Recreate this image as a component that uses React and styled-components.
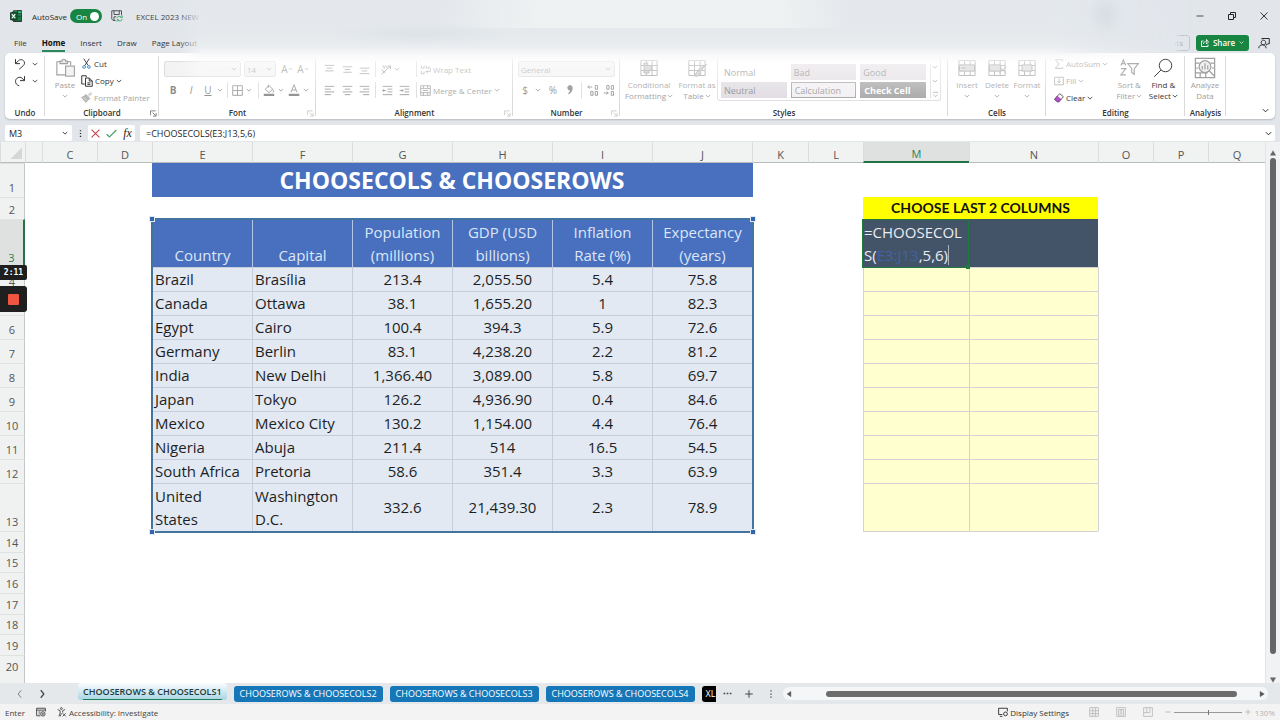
import React from 'react';
import styled, { createGlobalStyle, css } from 'styled-components';

const GlobalStyle = createGlobalStyle`
  * {
    box-sizing: border-box;
  }
  body {
    margin: 0;
    background: #e2e6eb;
    color: #262626;
    font-family: "Open Sans", "Noto Sans", sans-serif;
    font-size: 8px;
  }
  button, input, select {
    margin: 0;
    padding: 0;
    border: none;
    background: none;
    color: inherit;
    font: inherit;
  }
`;

const COLUMNS = [
  ['', 17], ['C', 55], ['D', 55], ['E', 100], ['F', 100], ['G', 100], ['H', 100], ['I', 100], ['J', 100],
  ['K', 56], ['L', 55], ['M', 106], ['N', 129], ['O', 55], ['P', 55], ['Q', null],
];

const HEADINGS = ['Country', 'Capital', 'Population (millions)', 'GDP (USD billions)', 'Inflation Rate (%)', 'Expectancy (years)'];

const COUNTRIES = [
  ['Brazil', 'Brasília', '213.4', '2,055.50', '5.4', '75.8'],
  ['Canada', 'Ottawa', '38.1', '1,655.20', '1', '82.3'],
  ['Egypt', 'Cairo', '100.4', '394.3', '5.9', '72.6'],
  ['Germany', 'Berlin', '83.1', '4,238.20', '2.2', '81.2'],
  ['India', 'New Delhi', '1,366.40', '3,089.00', '5.8', '69.7'],
  ['Japan', 'Tokyo', '126.2', '4,936.90', '0.4', '84.6'],
  ['Mexico', 'Mexico City', '130.2', '1,154.00', '4.4', '76.4'],
  ['Nigeria', 'Abuja', '211.4', '514', '16.5', '54.5'],
  ['South Africa', 'Pretoria', '58.6', '351.4', '3.3', '63.9'],
  ['United States', 'Washington D.C.', '332.6', '21,439.30', '2.3', '78.9'],
];

const EMPTY_ROWS = [14, 15, 16, 17, 18, 19, 20];

/* ---------- icons ---------- */

const Svg = styled.svg`
  display: block;
  flex: none;
  width: ${(p) => p.$size || 12}px;
  height: ${(p) => p.$size || 12}px;
  fill: none;
  stroke: currentColor;
  stroke-width: ${(p) => p.$stroke || 1.2};
`;

const Icon = ({ d, size, stroke, children }) => (
  <Svg viewBox="0 0 16 16" $size={size} $stroke={stroke} aria-hidden="true">
    {d && <path d={d} />}
    {children}
  </Svg>
);

const Chevron = ({ size = 6 }) => <Icon size={size} stroke={2.2} d="M2 5l6 6 6-6" />;

const ExcelLogo = () => (
  <Icon size={12} stroke={0}>
    <rect x="4" y="1" width="12" height="14" rx="1" fill="#21a366" />
    <path d="M10 1h5a1 1 0 0 1 1 1v3h-6z" fill="#33c481" />
    <path d="M4 8h12v6a1 1 0 0 1-1 1H5a1 1 0 0 1-1-1z" fill="#107c41" />
    <rect x="0" y="3.500" width="9.500" height="9.500" rx="1" fill="#0e6b37" />
    <path d="M2.500 5.500l4.500 5.500M7 5.500L2.500 11" stroke="#fff" strokeWidth="1.5" />
  </Icon>
);

const SaveIcon = () => (
  <Icon size={12} stroke={1}>
    <path d="M6 14H3L1 12V1h13v6M4 1v5h7V1M4 14V9h3" />
    <path d="M8 11a3.500 3.500 0 0 1 6-1.500M15 7.500V10h-2.500M15 12a3.500 3.500 0 0 1-6 1.500M8 15.500V13h2.500" stroke="#1d9a4b" />
  </Icon>
);

const PasteIcon = () => (
  <Icon size={20} stroke={0.9}>
    <path d="M8 13.500H1.500V3H4M10 3h2.500v3" />
    <path d="M4 4.500V2.500h1.500a1.500 1.500 0 0 1 3 0H10v2z" fill="#e8e8e8" />
    <rect x="8.500" y="6.500" width="7" height="8" fill="#f4f4f4" />
  </Icon>
);

const CutIcon = () => (
  <Icon size={11} stroke={1.3}>
    <path d="M4 1l6.500 10M12 1L5.500 11" />
    <circle cx="4.500" cy="13" r="2" stroke="#2f7fc1" />
    <circle cx="11.500" cy="13" r="2" stroke="#2f7fc1" />
  </Icon>
);

const CopyIcon = () => (
  <Icon size={12} stroke={1.3} d="M7 3V1H1v11h4M6 4h5l4 4v7H6zM11 4v4h4M8.500 10.500h4M8.500 12.500h4" />
);

const BrushIcon = () => (
  <Icon size={11} stroke={1.2}>
    <path d="M10 5l4-4 1.500 1.500-4 4" />
    <path d="M7 3.500l6 6-2 1.500-5.500-5.500zM5.500 5.500L1 8l6 7 4-4" fill="#c4c4c4" />
  </Icon>
);

const UndoIcon = () => <Icon size={12} stroke={1.3} d="M2 1.500v6h6M2 7.500L6 3.500c3-3 8-.5 8 3 0 2-1 3-2 4L7 15" />;
const RedoIcon = () => <Icon size={12} stroke={1.3} d="M14 1.500v6H8M14 7.500L10.500 4C7.500 1.500 2 4 2 8.500c0 3 2 5 5 6" />;

const LinesIcon = ({ d }) => <Icon size={11} stroke={1.2} d={d} />;

const LINES = {
  top: 'M1 2h14M4 6h8M2 10h12',
  middle: 'M1 4h14M4 8h8M2 12h12',
  bottom: 'M1 6h14M4 10h8M1 14h14',
  left: 'M1 2h14M1 6h9M1 10h14M1 14h9',
  center: 'M1 2h14M4 6h8M1 10h14M4 14h8',
  right: 'M1 2h14M6 6h9M1 10h14M6 14h9',
  outdent: 'M1 2h14M8 6h7M8 10h7M1 14h14M6 8H1M3 6L1 8l2 2',
  indent: 'M1 2h14M8 6h7M8 10h7M1 14h14M1 8h5M4 6l2 2-2 2',
};

const TableIcon = ({ mark }) => (
  <Icon size={20} stroke={0.8}>
    <path d="M1.500 2h13v12h-13zM1.500 6h13M1.500 10h13M6 2v12M10.500 2v12" />
    {mark === 'rules' && <path d="M4 6h6v4H4zM4 4h3v2H4zM4 10h4v2H4z" fill="#c9c9c9" />}
    {mark === 'brush' && <path d="M15.500 5l-5 6-1.500-1.500zM9.500 10c-2 0-1.500 3-4 4 2 1 5.500.5 5.500-2.500" fill="#c9c9c9" />}
    {mark === 'insert' && <path d="M2 5.500h12v5H2zM7 8H1m2.500-2.500L1 8l2.500 2.500" fill="#d4d4d4" />}
    {mark === 'delete' && <path d="M2 5.500h9v5H2zM10 7l5 5m0-5l-5 5" fill="#d4d4d4" />}
    {mark === 'format' && <path d="M4 5.500h8v5H4z" fill="#d9d9d9" />}
  </Icon>
);

const SortIcon = () => (
  <Icon size={20} stroke={0.9} d="M1.500 6L3.500 1.500 5.500 6M2.200 4.500h2.600M1.500 8.500h4l-4 5h4M7 4.500h8.500l-3.300 4V13l-2-1.500v-3z" />
);

const FindIcon = () => (
  <Icon size={20} stroke={0.8}>
    <circle cx="10" cy="6" r="5" />
    <path d="M6.500 9.500L1 15" />
  </Icon>
);

const AnalyzeIcon = () => (
  <Icon size={22} stroke={0.9}>
    <path d="M1 1h14v14H1zM1 4.500h3M1 8h2M1 11.500h9M12 4.500h3M13 8h2M4.500 12v3M8.500 12v3" />
    <circle cx="8" cy="7" r="4.300" fill="#f1f1f1" />
    <path d="M11 10l4 4M6 9V6.500M8 9V4.500M10 9V6" />
  </Icon>
);

/* ---------- window top ---------- */

const PageWrapper = styled.div`
  display: flex;
  flex-direction: column;
  min-height: 100vh;
  position: relative;
`;

const WindowTop = styled.header`
  position: relative;
`;

const TitleBar = styled.div`
  display: flex;
  align-items: center;
  height: 32px;
  padding: 0 12px 0 10px;
`;

const AutoSaveLabel = styled.label`
  margin-left: 10px;
`;

const ToggleWrapper = styled.span`
  position: relative;
  display: flex;
  align-items: center;
  margin: 0 9px 0 3px;
  color: white;
`;

const Toggle = styled.input`
  appearance: none;
  width: 32px;
  height: 14px;
  border-radius: 7px;
  background: #188542;

  &::after {
    content: '';
    display: block;
    width: 9px;
    height: 9px;
    margin: 3px 0 0 20px;
    border-radius: 50%;
    background: white;
  }
`;

const ToggleText = styled.span`
  position: absolute;
  left: 6px;
`;

const FileName = styled.span`
  margin-left: 13px;
  color: #444;
`;

const WindowButtons = styled.div`
  display: flex;
  gap: 24px;
  margin-left: auto;
  position: relative;
  z-index: 2;
`;

const PlainButton = styled.button`
  display: flex;
  align-items: center;
  justify-content: center;
`;

const TabRow = styled.nav`
  display: flex;
  align-items: center;
  height: 21px;
  padding: 0 10px 0 14px;
  gap: 15px;
`;

const RibbonTab = styled.button`
  height: 18px;
  padding: 0;
  color: #333;
  ${(p) => p.$active && css`
    color: #111;
    font-weight: 700;
    border-bottom: 2px solid #2b8a5a;
    padding-top: 2px;
  `}
`;

const TabActions = styled.div`
  display: flex;
  align-items: center;
  gap: 9px;
  margin-left: auto;
  position: relative;
  z-index: 2;
`;

const CommentsButton = styled.button`
  height: 16px;
  margin-right: -3px;
  padding: 0 6px;
  border: 1px solid #c3c8cc;
  border-radius: 3px;
  color: #a5abb0;
  mask-image: linear-gradient(to right, transparent calc(100% - 16px), black calc(100% - 8px));
`;

const ShareButton = styled.button`
  display: flex;
  align-items: center;
  justify-content: center;
  gap: 4px;
  width: 53px;
  height: 16px;
  border-radius: 3px;
  background: #188542;
  color: white;
  font-weight: 600;
`;

const Haze = styled.div`
  position: absolute;
  inset: 0;
  z-index: 1;
  pointer-events: none;
  background:
    radial-gradient(ellipse 18px 22px at 1106px 14px, rgba(200, 207, 213, 0.8), transparent),
    radial-gradient(ellipse 90px 12px at 420px 34px, rgba(214, 220, 226, 0.5), transparent),
    linear-gradient(to right, transparent 440px, rgba(240, 244, 244, 0.8) 540px, rgba(240, 244, 244, 0.8) 780px, transparent 850px) 0 0 / 100% 28px no-repeat,
    linear-gradient(
      to bottom,
      #e4e8ec 0,
      #e5e9ec 34px,
      #eaedf0 46px,
      rgba(250, 250, 251, 0.96) 57px,
      rgba(255, 255, 255, 0.5) 63px,
      rgba(255, 255, 255, 0.3) 80px,
      transparent 100px
    );
  mask-image: linear-gradient(to right, transparent 178px, black 202px, black calc(100% - 230px), rgba(0, 0, 0, 0.5) calc(100% - 180px), transparent calc(100% - 84px));
`;

/* ---------- ribbon ---------- */

const Ribbon = styled.div`
  display: flex;
  height: 66px;
  margin: 0 5px;
  padding: 0;
  border-radius: 5px;
  background: white;
  box-shadow: 0 1px 2px rgba(0, 0, 0, 0.2);
`;

const GroupBox = styled.section`
  position: relative;
  display: flex;
  flex-direction: column;
  flex: ${(p) => (p.$grow ? '1 0' : '0 0')} ${(p) => p.$width}px;
  min-width: 0;

  &::after {
    content: '';
    position: absolute;
    right: 0;
    top: 3px;
    bottom: 3px;
    width: 1px;
    background: #d9d9d9;
  }
`;

const GroupBody = styled.div`
  display: flex;
  flex: 1;
  padding: 0 ${(p) => p.$pad || 0}px;
`;

const GroupLabel = styled.div`
  height: 13px;
  line-height: 13px;
  text-align: center;
  font-weight: 600;
  color: #333;
`;

const Launcher = styled.button`
  position: absolute;
  right: 2px;
  bottom: 2px;
  color: ${(p) => (p.$dim ? '#bbb' : '#555')};
`;

const Group = ({ label, width, grow, pad, launcher, dim, children }) => (
  <GroupBox $width={width} $grow={grow} aria-label={label}>
    <GroupBody $pad={pad}>{children}</GroupBody>
    <GroupLabel>{label}</GroupLabel>
    {launcher && (
      <Launcher $dim={dim} aria-label={`${label} settings`}>
        <Icon size={7} stroke={1.6} d="M1 12V2h12M6 6l7 7M14 7v7H7" />
      </Launcher>
    )}
  </GroupBox>
);

const Stack = styled.div`
  display: flex;
  flex-direction: column;
  padding-top: ${(p) => (p.$two ? 6 : 2)}px;
  gap: ${(p) => (p.$two ? 1 : 0)}px;
`;

const ToolRow = styled.div`
  display: flex;
  align-items: center;
  height: 20px;
  color: #8d8d8d;
`;

const Tool = styled.button`
  display: flex;
  align-items: center;
  justify-content: center;
  width: ${(p) => p.$width || 18}px;
  height: 16px;
  font-size: 10px;
  font-weight: ${(p) => (p.$bold ? 700 : 400)};
  font-style: ${(p) => (p.$italic ? 'italic' : 'normal')};
  text-decoration: ${(p) => (p.$underline ? 'underline' : 'none')};
`;

const Divider = styled.span`
  width: 1px;
  height: 16px;
  margin: 0 3px;
  background: #dcdcdc;
`;

const TextTool = styled.button`
  display: flex;
  align-items: center;
  gap: ${(p) => p.$gap || 2}px;
  height: 17px;
  white-space: nowrap;
  color: ${(p) => (p.$dim ? '#a4a4a4' : '#333')};
`;

const BigTool = styled.button`
  display: flex;
  flex-direction: column;
  align-items: center;
  width: ${(p) => p.$width}px;
  height: 50px;
  padding-top: 4px;
  line-height: 11px;
  white-space: nowrap;
  color: ${(p) => (p.$dim ? '#a0a0a0' : '#333')};
`;

const BigLabel = styled.span`
  display: flex;
  align-items: center;
  gap: 1px;
  min-height: 11px;
`;

const BigIcon = styled.span`
  display: flex;
  align-items: center;
  height: 22px;
`;

const Big = ({ width, dim, icon, first, second, arrow }) => (
  <BigTool $width={width} $dim={dim}>
    <BigIcon>{icon}</BigIcon>
    <BigLabel>{first}</BigLabel>
    <BigLabel>{second}{arrow && <Chevron />}</BigLabel>
  </BigTool>
);

const SelectWrapper = styled.span`
  display: flex;
  align-items: center;
  justify-content: flex-end;
  position: relative;
  width: ${(p) => p.$width}px;
  height: 16px;
  margin-right: 3px;
  border: 1px solid #dedede;
  border-radius: 2px;
  background: #f3f3f3;
  padding-right: 3px;
  color: #aaa;

  select {
    appearance: none;
    position: absolute;
    inset: 0;
    width: 100%;
    padding-left: 2px;
  }
`;

const Dropdown = ({ label, width, value }) => (
  <SelectWrapper $width={width}>
    <select aria-label={label} defaultValue={value}>
      <option value={value}>{value}</option>
    </select>
    <Chevron />
  </SelectWrapper>
);

const Gallery = styled.div`
  display: grid;
  grid-template-columns: repeat(3, 1fr) 10px;
  grid-template-rows: 16px 16px;
  column-gap: 4px;
  row-gap: 2px;
  flex: 1;
  height: 46px;
  margin: 2px 6px 0 0;
  padding: 9px 0 3px 3px;
  border: 1px solid #e0e0e0;
  border-top: none;
  border-radius: 3px;
`;

const StyleCell = styled.button`
  padding: 0 3px;
  text-align: left;
  font-size: 9px;
  background: ${(p) => p.$bg || 'transparent'};
  color: ${(p) => p.$color || '#8c8c8c'};
  border: ${(p) => (p.$line ? '1px solid #aaa' : 'none')};
  font-weight: ${(p) => (p.$bold ? 700 : 400)};
`;

const GalleryScroll = styled.div`
  grid-column: 4;
  grid-row: 1 / 3;
  display: flex;
  flex-direction: column;
  align-items: center;
  justify-content: space-between;
  border-left: 1px solid #e0e0e0;
  color: #999;
`;

const RibbonEnd = styled.div`
  display: flex;
  align-items: flex-end;
  justify-content: flex-end;
  width: 49px;
  padding: 0 6px 5px 0;
`;

/* ---------- formula bar ---------- */

const FormulaBar = styled.div`
  display: flex;
  align-items: center;
  height: 23px;
  padding: 6px 5px 1px;
  font-size: 9px;
`;

const NameBox = styled.div`
  display: flex;
  align-items: center;
  width: 67px;
  height: 16px;
  padding: 0 4px;
  border-radius: 2px;
  background: white;

  input {
    flex: 1;
    min-width: 0;
  }
`;

const FormulaButtons = styled.div`
  display: flex;
  align-items: center;
  justify-content: space-around;
  width: 47px;
  height: 16px;
  margin-right: 5px;
  border-radius: 2px;
  background: white;
`;

const BarDots = styled.span`
  display: flex;
  justify-content: center;
  width: 16px;
`;

const FunctionButton = styled.button`
  font-family: "Liberation Serif", serif;
  font-size: 12px;
  font-style: italic;
`;

const FormulaField = styled.div`
  display: flex;
  align-items: center;
  flex: 1;
  height: 16px;
  padding: 0 3px 0 6px;
  border-radius: 2px;
  background: white;

  input {
    flex: 1;
    outline: none;
  }
`;

/* ---------- sheet ---------- */

const Workbook = styled.main`
  display: flex;
  flex: 1;
  background: white;
`;

const SheetArea = styled.div`
  position: relative;
  flex: 1;
  min-width: 0;
  overflow: hidden;
  background: linear-gradient(to right, #f0f1f1 24px, #c3c7c9 24px, #c3c7c9 25px, white 25px);
`;

const Sheet = styled.table`
  width: 100%;
  table-layout: fixed;
  border-collapse: separate;
  border-spacing: 0;
  font-size: 15px;
  line-height: 23px;

  td, th {
    padding: 0;
  }
`;

const ColumnHeader = styled.th`
  height: 21px;
  border-left: 1px solid #dcdddd;
  border-bottom: ${(p) => (p.$active ? '2px solid #217346' : '1px solid #b9bcbd')};
  background: ${(p) => (p.$active ? '#dfe1e1' : '#f1f2f2')};
  color: ${(p) => (p.$active ? '#2a8050' : '#555')};
  font-size: 11px;
  font-weight: 400;
  line-height: 15px;
  vertical-align: bottom;
`;

const CornerMark = styled.span`
  display: block;
  width: 11px;
  height: 11px;
  margin: 0 0 3px 10px;
  background: linear-gradient(135deg, transparent 50%, #d5d6d6 50%);
`;

const RowHeader = styled.th`
  height: ${(p) => p.$height}px;
  border-right: ${(p) => (p.$active ? '2px solid #217346' : '1px solid #c3c7c9')};
  border-top: 1px solid #e0e2e2;
  background: ${(p) => (p.$active ? '#dfe1e1' : '#f0f1f1')};
  color: ${(p) => (p.$active ? '#2a8050' : '#555')};
  font-size: 11px;
  font-weight: 400;
  line-height: 18px;
  vertical-align: bottom;
`;

const TitleCell = styled.td`
  background: #4870bf;
  color: white;
  text-align: center;
  font-size: 23px;
  font-weight: 700;
  box-shadow: 1px 0 #4870bf;
`;

const HeadingCell = styled.th`
  border-left: 1px solid #b4c6e7;
  border-top: 1px solid #b4c6e7;
  background: #4870bf;
  color: #dce6f8;
  font-weight: 400;
  text-align: center;
  vertical-align: bottom;

  span {
    display: block;
    padding: 0 4px;
  }
`;

const DataCell = styled.td`
  border-left: 1px solid #c6cedb;
  border-top: 1px solid #c6cedb;
  background: #e2e9f3;
  color: #1d1f24;
  text-align: ${(p) => (p.$text ? 'left' : 'center')};

  span {
    display: block;
    padding: ${(p) => (p.$text ? '0 8px 0 2px' : '0 2px')};
  }
`;

const YellowTitle = styled.td`
  background: #ffff00;
  color: #111;
  text-align: center;
  font-family: Lato, "Open Sans", sans-serif;
  font-size: 14px;
  font-weight: 700;
  line-height: 20px;
`;

const DarkCell = styled.td`
  position: relative;
  background: #445468;
  color: #e8edf2;
`;

const CellEditor = styled.div`
  position: absolute;
  inset: 0 0 -1px -1px;
  z-index: 1;
  padding: 1px 0 0 1px;
  border: 1px solid #1f7a3e;
  line-height: 23px;
  word-break: break-all;

  &::after {
    content: '';
    position: absolute;
    right: -2px;
    bottom: -2px;
    width: 4px;
    height: 4px;
    background: #1f7a3e;
  }
`;

const RangeText = styled.span`
  color: #3f62a6;
`;

const Caret = styled.span`
  border-right: 1px solid #a9b4c0;
`;

const PaleCell = styled.td`
  border-left: 1px solid #d3d3d3;
  border-top: 1px solid #d3d3d3;
  background: #ffffcf;
  box-shadow: 1px 0 #d3d3d3, 0 1px #d3d3d3;
`;

// border round the range that the formula refers to
const RangeOutline = styled.span`
  position: absolute;
  left: -2px;
  top: -2px;
  z-index: 1;
  width: 603px;
  height: 315px;
  border: 2px solid #41759f;
  pointer-events: none;
`;

const Handle = styled.i`
  position: absolute;
  width: 4px;
  height: 4px;
  background: #3465a8;
  outline: 1px solid #dfe8f5;
  ${(p) => p.$y}: -3px;
  ${(p) => p.$x}: -3px;
`;

const FirstHeading = styled(HeadingCell)`
  position: relative;
  overflow: visible;

  > span:last-child {
    padding: 0;
  }
`;

const VerticalBar = styled.div`
  display: flex;
  flex-direction: column;
  align-items: center;
  justify-content: space-between;
  width: 15px;
  padding: 8px 0 0;
  background: #f0f2f4;
  border-left: 1px solid #e2e5e8;
  color: #666;
`;

const VerticalThumb = styled.div`
  flex: 1;
  width: 6px;
  margin: 2px 0 23px;
  border-radius: 3px;
  background: #666;
`;

const Recorder = styled.aside`
  position: absolute;
  left: 0;
  top: 265px;
  z-index: 3;
  display: flex;
  flex-direction: column;
  gap: 6px;
  width: 27px;
`;

const RecorderTime = styled.div`
  height: 15px;
  border-radius: 0 2px 2px 0;
  background: #1f1f1f;
  color: white;
  font-family: "DejaVu Sans Mono", monospace;
  font-size: 8px;
  font-weight: 700;
  line-height: 15px;
  text-align: center;
`;

const RecorderStop = styled.button`
  display: flex;
  align-items: center;
  justify-content: center;
  height: 26px;
  border-radius: 0 3px 3px 0;
  background: #1f1f1f;

  span {
    width: 11px;
    height: 11px;
    border-radius: 1px;
    background: #ef5541;
  }
`;

/* ---------- bottom bars ---------- */

const SheetTabs = styled.footer`
  display: flex;
  align-items: center;
  height: 21px;
  padding-left: 15px;
  background: #e4e8eb;
  color: #444;
`;

const NavButtons = styled.div`
  display: flex;
  gap: 12px;
  width: 63px;
`;

const SheetTab = styled.button`
  height: 16px;
  margin-right: 7px;
  padding: 0 6px;
  border-radius: 3px;
  background: #1577b8;
  color: white;
  font-size: 9px;
  line-height: 16px;
  white-space: nowrap;
  ${(p) => p.$active && css`
    align-self: flex-start;
    height: 17px;
    padding: 0 5px;
    background: linear-gradient(#fbfdfe, #a9d4e4);
    color: #1c3a3c;
    font-weight: 600;

    span {
      display: block;
      height: 16px;
      border-bottom: 1px solid #16805b;
    }
  `}
  ${(p) => p.$cut && css`
    width: 14px;
    padding: 0 0 0 4px;
    overflow: hidden;
    text-align: left;
    border-radius: 3px 0 0 3px;
    background: black;
  `}
`;

const TabTools = styled.div`
  display: flex;
  align-items: center;
  gap: 12px;
  margin-right: 7px;
`;

const HorizontalBar = styled.div`
  display: flex;
  align-items: center;
  gap: 34px;
  flex: 1;
  height: 13px;
  margin-right: 12px;
  padding: 0 3px;
  border-radius: 6px;
  background: #f4f6f7;
  color: #555;
`;

const HorizontalThumb = styled.div`
  flex: 1;
  height: 6px;
  margin-right: -12px;
  border-radius: 3px;
  background: #6c6c6c;
`;

const StatusBar = styled.div`
  display: flex;
  align-items: center;
  height: 16px;
  padding: 0 5px;
  background: #f3f3f3;
  color: #444;
`;

const StatusItem = styled.button`
  display: flex;
  align-items: center;
  gap: 2px;
  margin-left: 11px;
`;

const StatusRight = styled.div`
  display: flex;
  align-items: center;
  margin-left: auto;
  color: #b3b3b3;
`;

const ViewButtons = styled.div`
  display: flex;
  gap: 17px;
  margin: 0 12px 0 20px;
`;

const ZoomSlider = styled.input`
  appearance: none;
  width: 68px;
  height: 8px;
  margin: 0 3px;
  background: linear-gradient(#999, #999) center / 100% 1px no-repeat;

  &::-webkit-slider-thumb {
    appearance: none;
    width: 1px;
    height: 5px;
    background: #777;
  }
`;

const ZoomText = styled.span`
  width: 24px;
  text-align: right;
`;

const RibbonBar = () => (
  <Ribbon>
    <Group label="Undo" width={40} pad={9}>
      <Stack>
        <TextTool $gap={6} aria-label="Undo"><UndoIcon /><Chevron /></TextTool>
        <TextTool $gap={6} aria-label="Redo"><RedoIcon /><Chevron /></TextTool>
      </Stack>
    </Group>
    <Group label="Clipboard" width={114} pad={4} launcher>
      <Big width={32} dim icon={<PasteIcon />} first="Paste" arrow />
      <Stack>
        <TextTool><CutIcon />Cut</TextTool>
        <TextTool><CopyIcon />Copy <Chevron /></TextTool>
        <TextTool $dim><BrushIcon />Format Painter</TextTool>
      </Stack>
    </Group>
    <Group label="Font" width={157} pad={5} launcher dim>
      <Stack $two>
        <ToolRow>
          <Dropdown label="Font name" width={77} value="" />
          <Dropdown label="Font size" width={32} value="14" />
          <Tool $width={16}>A<Icon size={5} stroke={2} d="M3 9l5-6 5 6" /></Tool>
          <Tool $width={16}>A<Icon size={5} stroke={2} d="M3 3l5 6 5-6" /></Tool>
        </ToolRow>
        <ToolRow>
          <Tool $bold>B</Tool>
          <Tool $italic>I</Tool>
          <Tool $underline $width={16}>U</Tool>
          <Tool $width={8} aria-label="Underline styles"><Chevron /></Tool>
          <Divider />
          <Tool $width={12} aria-label="Borders"><Icon size={11} d="M1 1h14v14H1zM8 1v14M1 8h14" /></Tool>
          <Tool $width={12} aria-label="Border styles"><Chevron /></Tool>
          <Divider />
          <Tool $width={14} aria-label="Fill color">
            <Icon size={12}>
              <path d="M7 1v4M3 7l5-5 5 5-5 4.500zM13 8c2 2 1 3 0 3" />
              <path d="M1 13h14v3H1z" fill="currentColor" stroke="none" />
            </Icon>
          </Tool>
          <Tool $width={10} aria-label="Fill colors"><Chevron /></Tool>
          <Tool $width={16} aria-label="Font color">
            <Icon size={12}>
              <path d="M4 11L8 1l4 10M5.500 8h5" />
              <path d="M1 13h14v3H1z" fill="currentColor" stroke="none" />
            </Icon>
          </Tool>
          <Tool $width={8} aria-label="Font colors"><Chevron /></Tool>
        </ToolRow>
      </Stack>
    </Group>
    <Group label="Alignment" width={197} pad={4} launcher dim>
      <Stack $two>
        <ToolRow>
          <Tool aria-label="Top align"><LinesIcon d={LINES.top} /></Tool>
          <Tool aria-label="Middle align"><LinesIcon d={LINES.middle} /></Tool>
          <Tool $width={16} aria-label="Bottom align"><LinesIcon d={LINES.bottom} /></Tool>
          <Divider />
          <Tool $width={14} aria-label="Orientation"><Icon size={12} d="M2 9l5 4M3 5c2-2 4 0 2 3M7 3l3 4M2 15L14 4M10 4h4v4" /></Tool>
          <Tool $width={8} aria-label="Orientations"><Chevron /></Tool>
        </ToolRow>
        <ToolRow>
          <Tool aria-label="Align left"><LinesIcon d={LINES.left} /></Tool>
          <Tool aria-label="Center"><LinesIcon d={LINES.center} /></Tool>
          <Tool $width={16} aria-label="Align right"><LinesIcon d={LINES.right} /></Tool>
          <Divider />
          <Tool $width={16} aria-label="Decrease indent"><LinesIcon d={LINES.outdent} /></Tool>
          <Tool aria-label="Increase indent"><LinesIcon d={LINES.indent} /></Tool>
        </ToolRow>
      </Stack>
      <Stack $two>
        <ToolRow>
          <Divider />
          <TextTool $dim><Icon size={11} d="M2 2v4h4V3M9 2v4h4V3M2 10v4h4v-3M15 6v5H9M11 9l-2 2 2 2" />Wrap Text</TextTool>
        </ToolRow>
        <ToolRow>
          <Divider />
          <TextTool $dim><Icon size={11} d="M1 1h14v14H1zM1 5h14M1 11h14M5 1v4M11 1v4M5 11v4M11 11v4M4 8h8" />Merge & Center <Chevron /></TextTool>
        </ToolRow>
      </Stack>
    </Group>
    <Group label="Number" width={107} pad={5} launcher dim>
      <Stack $two>
        <ToolRow><Dropdown label="Number format" width={97} value="General" /></ToolRow>
        <ToolRow>
          <Tool $width={14}>$</Tool>
          <Tool $width={12} aria-label="Currencies"><Chevron /></Tool>
          <Tool>%</Tool>
          <Tool $width={16} aria-label="Comma style"><Icon size={12} stroke={0}><path d="M8 2a3 3 0 0 1 3 3c0 4-2 7-5 8 2-2 3-4 2-5a3 3 0 0 1 0-6z" fill="currentColor" /></Icon></Tool>
          <Divider />
          <Tool $width={16} aria-label="Increase decimal"><Icon size={12} d="M7 4H1M3 2L1 4l2 2M11 2h3v5h-3zM5 10h3v5H5zM11 10h3v5h-3z" /></Tool>
          <Tool $width={16} aria-label="Decrease decimal"><Icon size={12} d="M5 2h3v5H5zM11 2h3v5h-3zM1 12h6M5 10l2 2-2 2M11 10h3v5h-3z" /></Tool>
        </ToolRow>
      </Stack>
    </Group>
    <Group label="Styles" width={328} grow pad={1}>
      <Big width={56} dim icon={<TableIcon mark="rules" />} first="Conditional" second="Formatting" arrow />
      <Big width={40} dim icon={<TableIcon mark="brush" />} first="Format as" second="Table" arrow />
      <Gallery>
        <StyleCell>Normal</StyleCell>
        <StyleCell $bg="#e4dfe4">Bad</StyleCell>
        <StyleCell $bg="#e4e1e4">Good</StyleCell>
        <StyleCell $bg="#e1dde3">Neutral</StyleCell>
        <StyleCell $bg="#f3f0f3" $color="#9c9c9c" $line>Calculation</StyleCell>
        <StyleCell $bg="#a9a9a9" $color="white" $line $bold>Check Cell</StyleCell>
        <GalleryScroll><Chevron /><Chevron /><Icon size={7} stroke={1.5} d="M2 3h12M3 8l5 5 5-5" /></GalleryScroll>
      </Gallery>
    </Group>
    <Group label="Cells" width={98} pad={4}>
      <Big width={30} dim icon={<TableIcon mark="insert" />} first="Insert" arrow />
      <Big width={30} dim icon={<TableIcon mark="delete" />} first="Delete" arrow />
      <Big width={30} dim icon={<TableIcon mark="format" />} first="Format" arrow />
    </Group>
    <Group label="Editing" width={139} pad={8}>
      <Stack>
        <TextTool $dim><Icon size={10} stroke={1.5} d="M14 3V1H2l6 7-6 7h12v-2" />AutoSum <Chevron /></TextTool>
        <TextTool $dim><Icon size={10} stroke={1.3} d="M1 2h14v12H1zM8 4v7M5 8l3 3 3-3" />Fill <Chevron /></TextTool>
        <TextTool>
          <Icon size={10} stroke={1.3}>
            <path d="M9 1l6 5-7 8H5L1 10z" />
            <path d="M5 5l6 5-3 4H5L1 10z" fill="#b14fc0" stroke="#8e3a9d" />
          </Icon>
          Clear <Chevron />
        </TextTool>
      </Stack>
      <Big width={42} dim icon={<SortIcon />} first="Sort &" second="Filter" arrow />
      <Big width={26} icon={<FindIcon />} first="Find &" second="Select" arrow />
    </Group>
    <Group label="Analysis" width={41}>
      <Big width={40} dim icon={<AnalyzeIcon />} first="Analyze" second="Data" />
    </Group>
    <RibbonEnd><PlainButton aria-label="Collapse ribbon"><Chevron size={7} /></PlainButton></RibbonEnd>
  </Ribbon>
);

const FirstTableCell = () => (
  <FirstHeading>
    <span>Country</span>
    <RangeOutline>
      <Handle $x="left" $y="top" />
      <Handle $x="right" $y="top" />
      <Handle $x="left" $y="bottom" />
      <Handle $x="right" $y="bottom" />
    </RangeOutline>
  </FirstHeading>
);

const Spreadsheet = () => (
  <Sheet>
    <colgroup>
      <col width="25" />
      {COLUMNS.map(([name, width]) => <col key={name} width={width || undefined} />)}
    </colgroup>
    <thead>
      <tr>
        <ColumnHeader><CornerMark /></ColumnHeader>
        {COLUMNS.map(([name]) => <ColumnHeader key={name} $active={name === 'M'}>{name}</ColumnHeader>)}
      </tr>
    </thead>
    <tbody>
      <tr>
        <RowHeader $height={34}>1</RowHeader>
        <td colSpan={3} />
        <TitleCell colSpan={6}>CHOOSECOLS & CHOOSEROWS</TitleCell>
        <td colSpan={7} />
      </tr>
      <tr>
        <RowHeader $height={22}>2</RowHeader>
        <td colSpan={11} />
        <YellowTitle colSpan={2}>CHOOSE LAST 2 COLUMNS</YellowTitle>
        <td colSpan={3} />
      </tr>
      <tr>
        <RowHeader $height={48} $active>3</RowHeader>
        <td colSpan={3} />
        <FirstTableCell />
        {HEADINGS.slice(1).map((text) => <HeadingCell key={text}><span>{text}</span></HeadingCell>)}
        <td colSpan={2} />
        <DarkCell>
          <CellEditor>=CHOOSECOLS(<RangeText>E3:J13</RangeText>,5,6)<Caret /></CellEditor>
        </DarkCell>
        <DarkCell />
        <td colSpan={3} />
      </tr>
      {COUNTRIES.map((row, i) => (
        <tr key={row[0]}>
          <RowHeader $height={i === 9 ? 48 : 24}>{i + 4}</RowHeader>
          <td colSpan={3} />
          {row.map((value, n) => <DataCell key={n} $text={n < 2}><span>{value}</span></DataCell>)}
          <td colSpan={2} />
          <PaleCell />
          <PaleCell />
          <td colSpan={3} />
        </tr>
      ))}
      {EMPTY_ROWS.map((n) => (
        <tr key={n}>
          <RowHeader $height={n % 3 ? 21 : 20}>{n}</RowHeader>
          <td colSpan={16} />
        </tr>
      ))}
    </tbody>
  </Sheet>
);

const App = () => {
  return (
    <PageWrapper>
      <GlobalStyle />
      <WindowTop>
        <TitleBar>
          <ExcelLogo />
          <AutoSaveLabel htmlFor="autosave">AutoSave</AutoSaveLabel>
          <ToggleWrapper>
            <Toggle id="autosave" type="checkbox" defaultChecked />
            <ToggleText>On</ToggleText>
          </ToggleWrapper>
          <SaveIcon />
          <FileName>EXCEL 2023 NEW F</FileName>
          <WindowButtons>
            <PlainButton aria-label="Minimize"><Icon size={8} stroke={1.6} d="M1 8h14" /></PlainButton>
            <PlainButton aria-label="Restore"><Icon size={8} stroke={2} d="M1 5h10v10H1zM5 4V1h10v10h-3" /></PlainButton>
            <PlainButton aria-label="Close"><Icon size={8} stroke={1.8} d="M1 1l14 14M15 1L1 15" /></PlainButton>
          </WindowButtons>
        </TitleBar>
        <TabRow>
          <RibbonTab>File</RibbonTab>
          <RibbonTab $active>Home</RibbonTab>
          <RibbonTab>Insert</RibbonTab>
          <RibbonTab>Draw</RibbonTab>
          <RibbonTab>Page Layout</RibbonTab>
          <TabActions>
            <CommentsButton>Comments</CommentsButton>
            <ShareButton>
              <Icon size={8} stroke={1.8} d="M5 4H1v11h13v-4M5 10c0-4 3-5 6-5V1l4 5-4 4V7" />
              Share
              <Chevron size={5} />
            </ShareButton>
            <PlainButton aria-label="Presenter"><Icon size={12} stroke={1.3} d="M5 2h10v7h-2l-2 2V9M5 2v1M6 10a3 3 0 1 0 0-5.500 3 3 0 0 0 0 5.500zM1 15c0-6 9-6 10 0" /></PlainButton>
          </TabActions>
        </TabRow>
        <RibbonBar />
        <Haze />
      </WindowTop>
      <FormulaBar>
        <NameBox>
          <input aria-label="Name box" defaultValue="M3" />
          <Chevron />
        </NameBox>
        <BarDots><Icon size={9} stroke={2.4} d="M8 2v2M8 7v2M8 12v2" /></BarDots>
        <FormulaButtons>
          <PlainButton aria-label="Cancel"><Icon size={9} stroke={1.8}><path d="M1 1l14 14M15 1L1 15" stroke="#c03a4a" /></Icon></PlainButton>
          <PlainButton aria-label="Accept"><Icon size={11} stroke={1.8}><path d="M1 9l4 4L15 3" stroke="#4aa36c" /></Icon></PlainButton>
          <FunctionButton>fx</FunctionButton>
        </FormulaButtons>
        <FormulaField>
          <input aria-label="Formula" defaultValue="=CHOOSECOLS(E3:J13,5,6)" />
          <Chevron size={7} />
        </FormulaField>
      </FormulaBar>
      <Workbook>
        <SheetArea><Spreadsheet /></SheetArea>
        <VerticalBar>
          <Icon size={6} stroke={0}><path d="M8 2l7 12H1z" fill="currentColor" /></Icon>
          <VerticalThumb />
          <Icon size={6} stroke={0}><path d="M1 2h14L8 14z" fill="currentColor" /></Icon>
        </VerticalBar>
      </Workbook>
      <SheetTabs>
        <NavButtons>
          <PlainButton aria-label="Previous sheet"><Icon size={10} stroke={1} d="M10 2L5 8l5 6" /></PlainButton>
          <PlainButton aria-label="Next sheet"><Icon size={10} stroke={2} d="M6 2l5 6-5 6" /></PlainButton>
        </NavButtons>
        <SheetTab $active><span>CHOOSEROWS & CHOOSECOLS1</span></SheetTab>
        <SheetTab>CHOOSEROWS & CHOOSECOLS2</SheetTab>
        <SheetTab>CHOOSEROWS & CHOOSECOLS3</SheetTab>
        <SheetTab>CHOOSEROWS & CHOOSECOLS4</SheetTab>
        <SheetTab $cut>XL</SheetTab>
        <TabTools>
          <PlainButton aria-label="More sheets"><Icon size={9} stroke={3} d="M1 8h3M6.500 8h3M12 8h3" /></PlainButton>
          <PlainButton aria-label="New sheet"><Icon size={10} stroke={1.6} d="M8 2v12M2 8h12" /></PlainButton>
          <Icon size={10} stroke={2} d="M8 2v2M8 7v2M8 12v2" />
        </TabTools>
        <HorizontalBar>
          <Icon size={6} stroke={0}><path d="M13 1v14L3 8z" fill="currentColor" /></Icon>
          <HorizontalThumb />
          <Icon size={6} stroke={0}><path d="M3 1v14l11-7z" fill="currentColor" /></Icon>
        </HorizontalBar>
      </SheetTabs>
      <StatusBar>
        Enter
        <StatusItem aria-label="Record macro">
          <Icon size={10} stroke={1.5}><path d="M7 14H1V2h14v5M1 5h14M4 8h3M4 11h2" /><circle cx="11" cy="11" r="3.500" /><circle cx="11" cy="11" r="1" /></Icon>
        </StatusItem>
        <StatusItem>
          <Icon size={10} stroke={1.4}><circle cx="7" cy="2.500" r="1.500" /><path d="M1 4l4 2v4l-2 5M13 4L9 6v3M7 10l-2 5M9 10l5 5M14 10l-5 5" /></Icon>
          Accessibility: Investigate
        </StatusItem>
        <StatusRight>
          <TextTool $gap={2}><Icon size={10} stroke={1.5}><path d="M7 12H1V2h14v5M3 15h4" /><circle cx="12" cy="11" r="3" /></Icon>Display Settings</TextTool>
          <ViewButtons>
            <PlainButton aria-label="Normal view"><Icon size={10} d="M1 1h14v14H1zM6 1v14M10.500 1v14M1 6h14M1 10.500h14" /></PlainButton>
            <PlainButton aria-label="Page layout view"><Icon size={10} d="M1 1h14v14H1zM4 4h8v9H4zM6 6h4M6 8h4M6 10h4" /></PlainButton>
            <PlainButton aria-label="Page break view"><Icon size={10} d="M1 1h14v14H1zM6 1v8H1M6 9h5V1" /></PlainButton>
          </ViewButtons>
          <PlainButton aria-label="Zoom out"><Icon size={6} stroke={2} d="M1 8h14" /></PlainButton>
          <ZoomSlider type="range" min="10" max="250" defaultValue="130" aria-label="Zoom" />
          <PlainButton aria-label="Zoom in"><Icon size={6} stroke={2} d="M1 8h14M8 1v14" /></PlainButton>
          <ZoomText>130%</ZoomText>
        </StatusRight>
      </StatusBar>
      <Recorder>
        <RecorderTime>2:11</RecorderTime>
        <RecorderStop aria-label="Stop recording"><span /></RecorderStop>
      </Recorder>
    </PageWrapper>
  );
}

export default App;
